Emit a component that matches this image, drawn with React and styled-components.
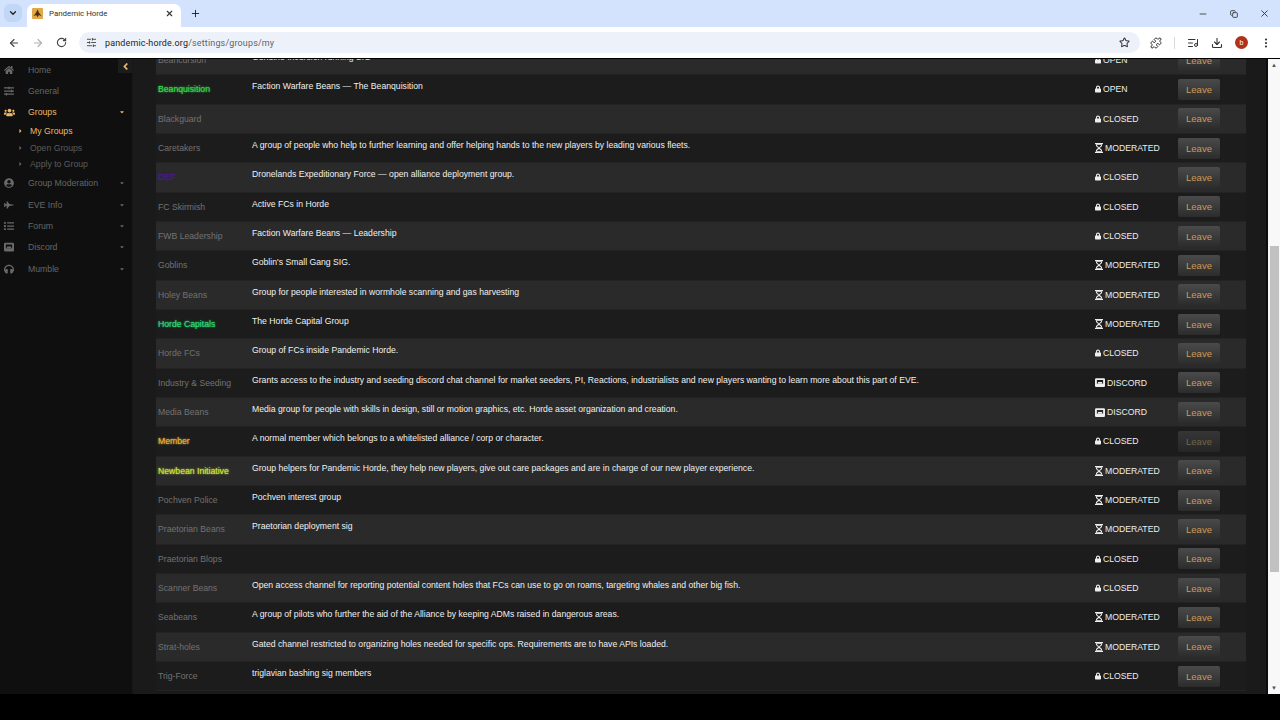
import React from 'react';
import styled, { createGlobalStyle } from 'styled-components';
import { ChevronDown, X, Plus, ArrowLeft, ArrowRight, RotateCw, SlidersHorizontal, Star, Puzzle, ListMusic, Download, MoreVertical, Minus, Copy } from 'lucide-react';
import { FaHome, FaSlidersH, FaUsers, FaUserCircle, FaFighterJet, FaList, FaHeadphones, FaCaretDown, FaCaretRight, FaAngleLeft, FaLock } from 'react-icons/fa';

const Global = createGlobalStyle`
  html, body { margin: 0; padding: 0; height: 100%; overflow: hidden; background: #000; }
  * { box-sizing: border-box; }
  body { font-family: "Liberation Sans", Arial, sans-serif; }
`;
const Page = styled.div`width: 1280px; height: 720px; display: flex; flex-direction: column; overflow: hidden; background: #000;`;
const TabStrip = styled.div`height: 27px; background: #d3e3fd; display: flex; align-items: flex-end; padding-left: 4px; color: #1f1f1f;`;
const TabMenu = styled.div`width: 18px; height: 18px; margin-bottom: 5px; border-radius: 6px; background: #c2d6f5; display: flex; align-items: center; justify-content: center;`;
const Tab = styled.div`width: 154px; height: 23px; margin-left: 5px; background: #fff; border-radius: 7px 7px 0 0; display: flex; align-items: center; padding: 0 7px 4px 5px; gap: 6px; font-family: Roboto, sans-serif; font-size: 7.9px; color: #333;`;
const Favicon = styled.svg`width: 11px; height: 11px; flex: none;`;
const TabTitle = styled.span`flex: 1;`;
const NewTab = styled.div`margin: 0 0 5px 5px; width: 18px; height: 18px; display: flex; align-items: center; justify-content: center;`;
const Spacer = styled.div`flex: 1;`;
const WinBtns = styled.div`display: flex; height: 27px; align-items: center; gap: 21.5px; padding-right: 10px; color: #333;`;
const Toolbar = styled.div`height: 31px; background: #fff; display: flex; align-items: center; padding: 0 8px; color: #444;`;
const NavIcons = styled.div`display: flex; gap: 12px; align-items: center;`;
const Omni = styled.div`height: 21px; flex: 1; margin-left: 12px; background: #edf2fa; border-radius: 11px; display: flex; align-items: center; padding: 0 10px 0 7px; gap: 8px; margin-right: 10px;`;
const Url = styled.span`font-family: Roboto, sans-serif; font-size: 8.95px; color: #5f6368; letter-spacing: .02em; b { font-weight: 400; color: #222; }`;
const Right = styled.div`display: flex; align-items: center; gap: 12px; color: #333;`;
const Divider = styled.div`width: 1px; height: 12px; background: #d8d8d8;`;
const Avatar = styled.div`width: 13px; height: 13px; border-radius: 50%; background: #b3301a; color: #fff; font-size: 7px; display: flex; align-items: center; justify-content: center;`;
const Main = styled.div`height: 636px; display: flex; background: #1a1a1a; overflow: hidden; border-top: 1px solid #000;`;
const Sidebar = styled.nav`width: 133px; flex: none; background: #0f0f0f; position: relative; border-right: 1px solid #171717;`;
const Collapse = styled.div`position: absolute; right: 0; top: 0; width: 14px; height: 14px; background: #1c1c1c; color: #eeb765; display: flex; align-items: center; justify-content: center; font-size: 11px;`;
const NavItem = styled.div`height: 21.33px; display: flex; align-items: center; padding: 0 7px 0 4px; font-size: 8.7px; color: ${p => p.$active ? '#eeb765' : '#666'};
  svg.main { width: ${p => p.$active ? 11 : 10}px; height: ${p => p.$active ? 11 : 10}px; margin-right: ${p => p.$active ? -1 : 0}px; color: ${p => p.$active ? '#eeb765' : '#6a6a6a'}; flex: none; }`;
const NavLabel = styled.span`margin-left: 14px; flex: 1;`;
const Caret = styled(FaCaretDown)`width: 6px; height: 6px; color: ${p => p.$active ? '#eeb765' : '#666'};`;
const SubItem = styled.div`height: 16.6px; display: flex; align-items: center; padding-left: 18px; gap: 7px; font-size: 8.7px; color: ${p => p.$active ? '#eeb765' : '#5c5c5c'}; svg { width: 5px; height: 6px; color: ${p => p.$active ? '#eeb765' : '#666'}; }`;
const Gutter = styled.div`width: 23px; flex: none; background: #1a1a1a;`;
const TableWrap = styled.div`width: 1090px; flex: none; margin-top: -13px;`;
const Row = styled.div`height: 29.33px; display: grid; grid-template-columns: 96px 843px 83px 68px; background: ${p => p.$odd ? '#2a2a2a' : '#1c1c1c'}; border-bottom: 1px solid #232323; font-size: 8.66px;`;
const Name = styled.div`align-self: center; padding-left: 2px; color: ${p => p.$color || '#727272'}; text-shadow: ${p => p.$color ? `0 0 2px ${p.$color}` : 'none'}; white-space: nowrap;`;
const Desc = styled.div`padding-top: 6px; color: #f0f0f0; white-space: nowrap;`;
const Status = styled.div`align-self: center; display: flex; align-items: center; gap: 2px; color: #eee; svg { flex: none; }`;
const StatusSvg = styled.span`display: flex; svg { width: ${p => p.$w}px; height: ${p => p.$h}px; }`;
const Leave = styled.button`width: 42px; height: 21px; align-self: center; border: none; border-radius: 2px; background: ${p => p.$dim ? 'linear-gradient(#363636, #262626)' : 'linear-gradient(#4a4a4a, #2c2c2c)'}; color: ${p => p.$dim ? '#75644a' : '#cf9a55'}; font: 9.5px "Liberation Sans", sans-serif; padding: 0;`;
const RightGutter = styled.div`width: 22px; flex: none; background: #1a1a1a; border-right: 2px solid #0d0d0d;`;
const ScrollTrack = styled.div`width: 12px; flex: none; background: #f8f8f8; display: flex; flex-direction: column; align-items: center; color: #555; font-size: 6px;`;
const ScrollThumb = styled.div`width: 9px; height: 326px; margin-top: 175px; background: #c1c1c1;`;
const Arrow = styled.div`height: 12px; display: flex; align-items: center; justify-content: center;`;
const Bottom = styled.div`flex: 1; background: #000;`;

const DiscordBox = ({ className }) => (
  <svg className={className} viewBox="0 0 16 14" fill="currentColor"><path fillRule="evenodd" d="M2 0h12a2 2 0 0 1 2 2v10a2 2 0 0 1-2 2H2a2 2 0 0 1-2-2V2a2 2 0 0 1 2-2zm1 3v6h10V3H3z"/><path d="M5 6h6l1 3H4z"/></svg>
);
const Hourglass = () => (
  <svg viewBox="0 0 8 10" fill="currentColor"><path d="M0 0h8v1.300H0zM0 8.700h8V10H0z"/><path fillRule="evenodd" d="M1 1.300h6v1.600L4.800 5 7 7.100v1.600H1V7.100L3.200 5 1 2.900zm1 .7v.6L4 4.400 6 2.600V2zm2 4L2 7.600V8h4v-.4z"/></svg>
);
const StatusIcon = ({ k }) => k === 'MODERATED'
  ? <StatusSvg $w={8} $h={10}><Hourglass /></StatusSvg>
  : k === 'DISCORD' ? <StatusSvg $w={10} $h={9}><DiscordBox /></StatusSvg>
  : <StatusSvg $w={6} $h={8}><FaLock /></StatusSvg>;

const rows = [
  ['Beancursion', 'Genuine Incursion running SIG', 'OPEN'],
  ['Beanquisition', 'Faction Warfare Beans — The Beanquisition', 'OPEN', '#35e04c'],
  ['Blackguard', '', 'CLOSED'],
  ['Caretakers', 'A group of people who help to further learning and offer helping hands to the new players by leading various fleets.', 'MODERATED'],
  ['DEF', 'Dronelands Expeditionary Force — open alliance deployment group.', 'CLOSED', '#4a1a8a'],
  ['FC Skirmish', 'Active FCs in Horde', 'CLOSED'],
  ['FWB Leadership', 'Faction Warfare Beans — Leadership', 'CLOSED'],
  ['Goblins', "Goblin's Small Gang SIG.", 'MODERATED'],
  ['Holey Beans', 'Group for people interested in wormhole scanning and gas harvesting', 'MODERATED'],
  ['Horde Capitals', 'The Horde Capital Group', 'MODERATED', '#2ee07a'],
  ['Horde FCs', 'Group of FCs inside Pandemic Horde.', 'CLOSED'],
  ['Industry & Seeding', 'Grants access to the industry and seeding discord chat channel for market seeders, PI, Reactions, industrialists and new players wanting to learn more about this part of EVE.', 'DISCORD'],
  ['Media Beans', 'Media group for people with skills in design, still or motion graphics, etc. Horde asset organization and creation.', 'DISCORD'],
  ['Member', 'A normal member which belongs to a whitelisted alliance / corp or character.', 'CLOSED', '#eeb73a'],
  ['Newbean Initiative', 'Group helpers for Pandemic Horde, they help new players, give out care packages and are in charge of our new player experience.', 'MODERATED', '#d6e83a'],
  ['Pochven Police', 'Pochven interest group', 'MODERATED'],
  ['Praetorian Beans', 'Praetorian deployment sig', 'MODERATED'],
  ['Praetorian Blops', '', 'CLOSED'],
  ['Scanner Beans', 'Open access channel for reporting potential content holes that FCs can use to go on roams, targeting whales and other big fish.', 'CLOSED'],
  ['Seabeans', 'A group of pilots who further the aid of the Alliance by keeping ADMs raised in dangerous areas.', 'MODERATED'],
  ['Strat-holes', 'Gated channel restricted to organizing holes needed for specific ops. Requirements are to have APIs loaded.', 'MODERATED'],
  ['Trig-Force', 'triglavian bashing sig members', 'CLOSED'],
];

const nav = [
  [FaUserCircle, 'Group Moderation'], [FaFighterJet, 'EVE Info'], [FaList, 'Forum'], [DiscordBox, 'Discord'], [FaHeadphones, 'Mumble'],
];

export default function App() {
  return (
    <Page>
      <Global />
      <TabStrip>
        <TabMenu><ChevronDown size={10} strokeWidth={3} /></TabMenu>
        <Tab>
          <Favicon viewBox="0 0 12 12"><rect width="12" height="12" rx="1" fill="#e0a84a"/><path d="M6 1.500 7.500 5 10.500 9 7.500 7.500 6 10 4.500 7.500 1.500 9 4.500 5z" fill="#4a2f10"/></Favicon>
          <TabTitle>Pandemic Horde</TabTitle>
          <X size={9} strokeWidth={3} />
        </Tab>
        <NewTab><Plus size={11} strokeWidth={2} /></NewTab>
        <Spacer />
        <WinBtns><Minus size={10} /><Copy size={8} strokeWidth={2.6} /><X size={11} /></WinBtns>
      </TabStrip>
      <Toolbar>
        <NavIcons>
          <ArrowLeft size={12} strokeWidth={2.2} />
          <ArrowRight size={12} color="#b0b0b0" strokeWidth={2.2} />
          <RotateCw size={11} strokeWidth={2.4} />
        </NavIcons>
        <Omni>
          <SlidersHorizontal size={11} />
          <Url><b>pandemic-horde.org</b>/settings/groups/my</Url>
          <Spacer />
          <Star size={11} color="#333" strokeWidth={2.2} />
        </Omni>
        <Right>
          <Puzzle size={12} strokeWidth={2} />
          <Divider />
          <ListMusic size={12} strokeWidth={2} />
          <Download size={12} strokeWidth={2.2} />
          <Avatar>b</Avatar>
          <MoreVertical size={12} strokeWidth={2.4} />
        </Right>
      </Toolbar>
      <Main>
        <Sidebar>
          <Collapse><FaAngleLeft /></Collapse>
          <NavItem><FaHome className="main" /><NavLabel>Home</NavLabel></NavItem>
          <NavItem><FaSlidersH className="main" /><NavLabel>General</NavLabel></NavItem>
          <NavItem $active><FaUsers className="main" /><NavLabel>Groups</NavLabel><Caret $active /></NavItem>
          <SubItem $active><FaCaretRight />My Groups</SubItem>
          <SubItem><FaCaretRight />Open Groups</SubItem>
          <SubItem><FaCaretRight />Apply to Group</SubItem>
          {nav.map(([I, l]) => (
            <NavItem key={l}><I className="main" /><NavLabel>{l}</NavLabel><Caret /></NavItem>
          ))}
        </Sidebar>
        <Gutter />
        <TableWrap>
          {rows.map((r, i) => (
            <Row key={r[0]} $odd={i % 2 === 0}>
              <Name $color={r[3]}>{r[0]}</Name>
              <Desc>{r[1]}</Desc>
              <Status><StatusIcon k={r[2]} />{r[2]}</Status>
              <Leave $dim={r[0] === 'Member'}>Leave</Leave>
            </Row>
          ))}
        </TableWrap>
        <RightGutter />
        <ScrollTrack>
          <Arrow>▲</Arrow>
          <ScrollThumb />
          <Spacer />
          <Arrow>▼</Arrow>
        </ScrollTrack>
      </Main>
      <Bottom />
    </Page>
  );
}
